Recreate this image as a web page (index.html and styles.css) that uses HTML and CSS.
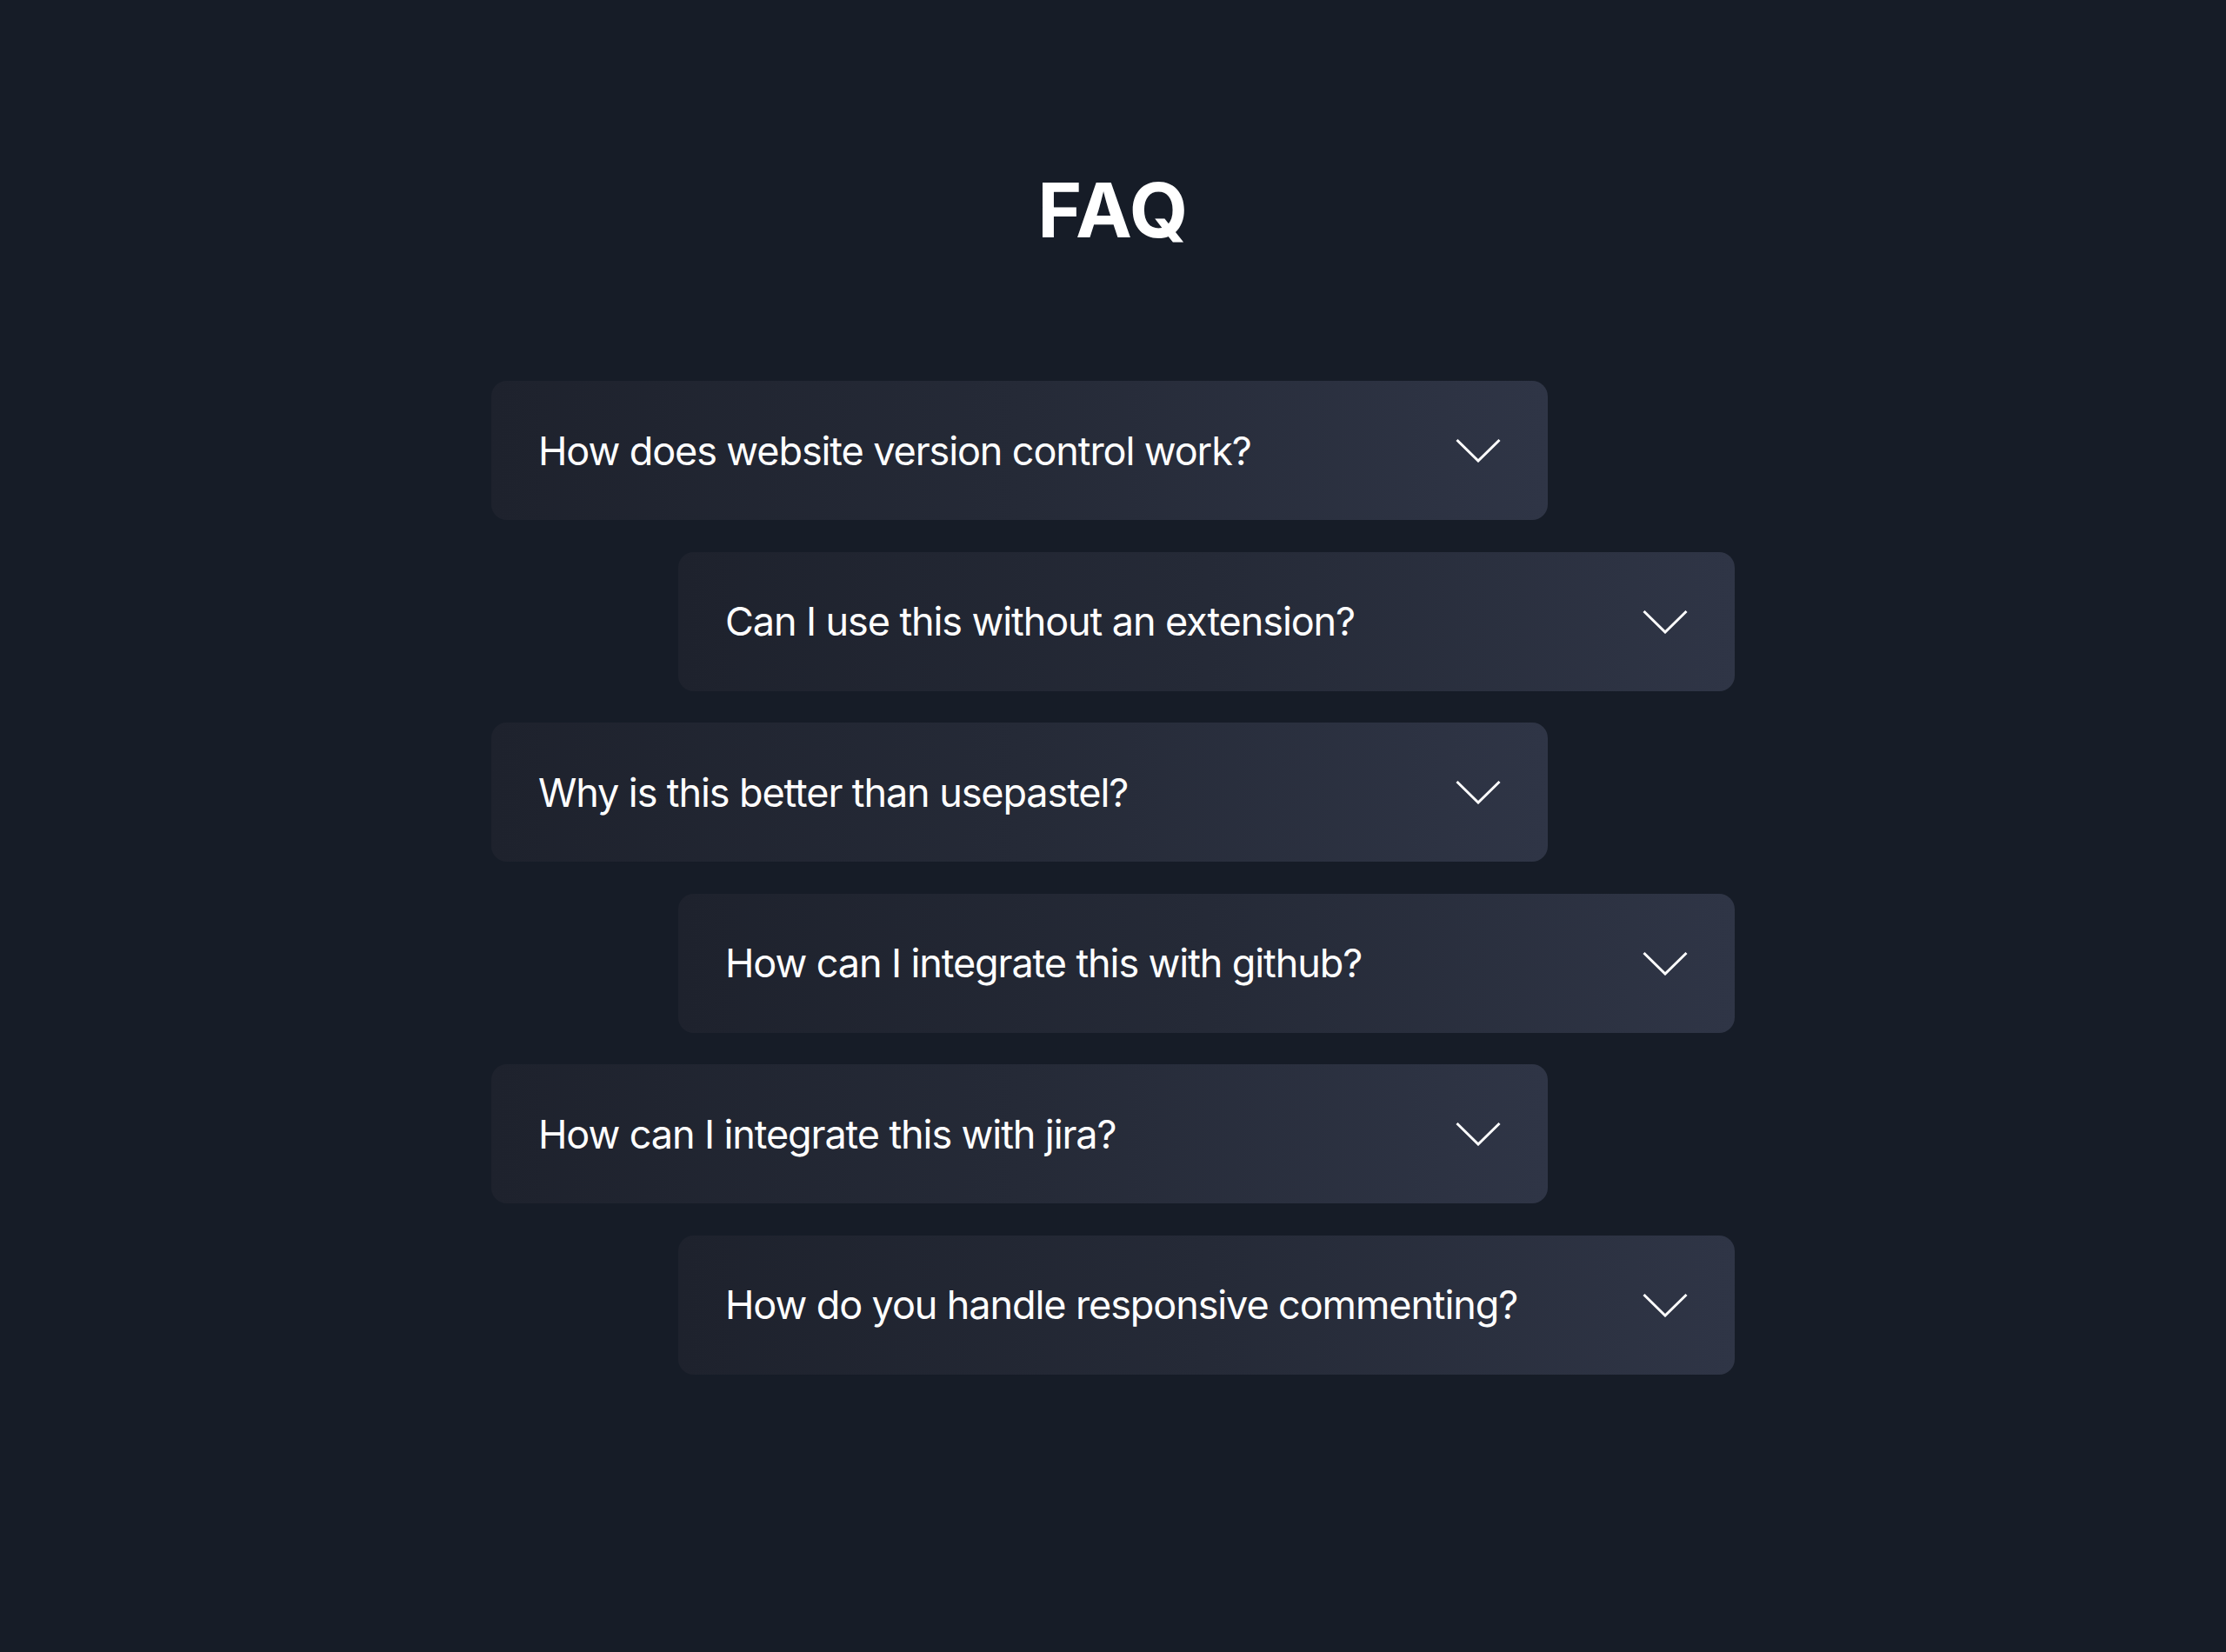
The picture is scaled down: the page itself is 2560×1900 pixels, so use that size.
FILE: index.html
```
<!DOCTYPE html>
<html lang="en">
<head>
  <meta charset="UTF-8" />
  <title>FAQ</title>
  <meta name="viewport" content="width=device-width, initial-scale=1.0" />
  <link rel="stylesheet" href="styles.css">
</head>
<body>
  <main class="faq">
    <h1 class="faq-title">FAQ</h1>

    <div class="faq-list">
      <div class="faq-item left">
        <span class="question">How does website version control work?</span>
        <svg class="chevron" viewBox="0 0 52 28"><polyline points="1.5,2 26,26 50.5,2" /></svg>
      </div>
      <div class="faq-item right">
        <span class="question">Can I use this without an extension?</span>
        <svg class="chevron" viewBox="0 0 52 28"><polyline points="1.5,2 26,26 50.5,2" /></svg>
      </div>
      <div class="faq-item left">
        <span class="question">Why is this better than usepastel?</span>
        <svg class="chevron" viewBox="0 0 52 28"><polyline points="1.5,2 26,26 50.5,2" /></svg>
      </div>
      <div class="faq-item right">
        <span class="question">How can I integrate this with github?</span>
        <svg class="chevron" viewBox="0 0 52 28"><polyline points="1.5,2 26,26 50.5,2" /></svg>
      </div>
      <div class="faq-item left">
        <span class="question">How can I integrate this with jira?</span>
        <svg class="chevron" viewBox="0 0 52 28"><polyline points="1.5,2 26,26 50.5,2" /></svg>
      </div>
      <div class="faq-item right">
        <span class="question">How do you handle responsive commenting?</span>
        <svg class="chevron" viewBox="0 0 52 28"><polyline points="1.5,2 26,26 50.5,2" /></svg>
      </div>
    </div>
  </main>
</body>
</html>
```

FILE: styles.css
```
* {
  box-sizing: border-box;
}

body {
  margin: 0;
  min-height: 100vh;
  background: #161c27;
  color: #fff;
  font-family: Inter, "Noto Sans", sans-serif;
}

.faq {
  width: 1430px;
  margin: 0 auto;
  padding-top: 198px;
}

.faq-title {
  margin: 0 0 153px;
  font-size: 87px;
  line-height: 1;
  font-weight: 700;
  text-align: center;
  letter-spacing: 0.5px;
}

.faq-list {
  display: flex;
  flex-direction: column;
  gap: 36.6px;
}

.faq-item {
  width: 1215px;
  height: 160px;
  display: flex;
  align-items: center;
  justify-content: space-between;
  padding: 0 54px;
  border-radius: 18px;
  background: linear-gradient(90deg, #1e222d 0%, #252a37 50%, #2f3546 100%);
}

.faq-item.left  { align-self: flex-start; }
.faq-item.right { align-self: flex-end; }

.question {
  font-size: 45px;
  font-weight: 400;
  letter-spacing: -1.1px;
}

.chevron {
  width: 52px;
  height: 28px;
  flex-shrink: 0;
  fill: none;
  stroke: #fff;
  stroke-width: 3;
}
```
